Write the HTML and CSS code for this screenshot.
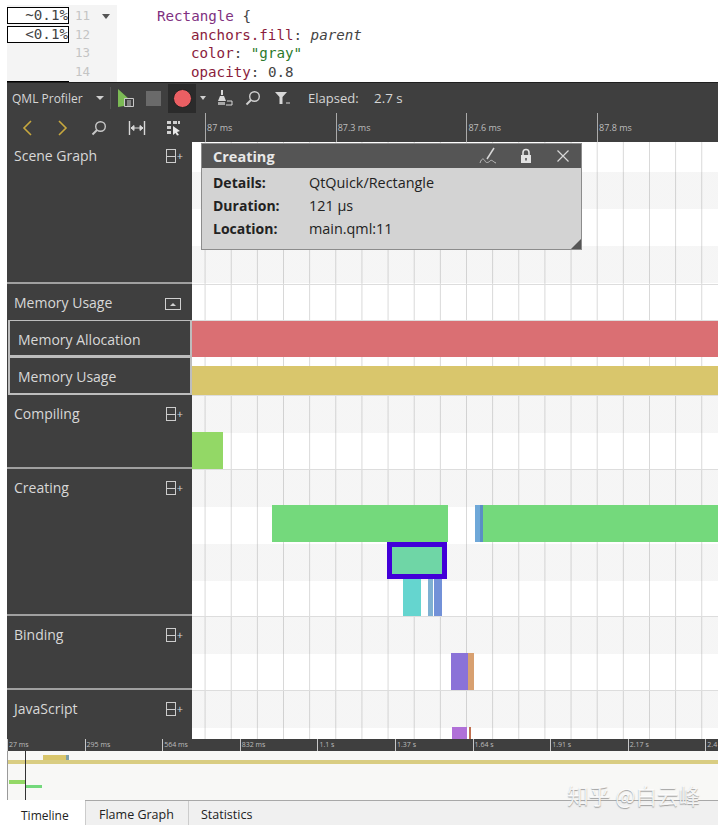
FILE: index.html
```html
<!DOCTYPE html>
<html lang="en">
<head>
    <meta charset="UTF-8">
    <meta name="viewport" content="width=device-width, initial-scale=1.0">
    <title>QML Profiler</title>
    <link rel="stylesheet" href="styles.css">
</head>
<body>
    <div class="editor">
        <div class="gutter">
            <div class="cost-col">
                <div class="cost">~0.1%</div>
                <div class="cost">&lt;0.1%</div>
            </div>
            <div class="line-nums">
                <div>11</div>
                <div>12</div>
                <div>13</div>
                <div>14</div>
            </div>
            <div class="fold"></div>
        </div>
        <div class="code">
            <div class="indent1"><span class="type">Rectangle</span> {</div>
            <div class="indent2"><span class="prop">anchors.fill</span>: <i>parent</i></div>
            <div class="indent2"><span class="prop">color</span>: <span class="str">"gray"</span></div>
            <div class="indent2"><span class="prop">opacity</span>: 0.8</div>
        </div>
    </div>

    <div class="toolbar">
        <span class="tool-title">QML Profiler</span>
        <span class="caret"></span>
        <span class="tool-sep"></span>
        <svg class="ico-start" width="17" height="20" viewBox="0 0 17 20">
            <path d="M0 1 L11 11 L6 11 L6 18 L0 19 Z" fill="#7cbb55"/>
            <path d="M6.5 10.5 h9 v8 h-9 z M9 13 h4 M9 15 h4 M9 17 h4" fill="none" stroke="#c8c8c8"/>
        </svg>
        <span class="stop"></span>
        <span class="rec-box"><span class="rec"></span></span>
        <span class="caret small"></span>
        <svg class="ico-clear" width="18" height="18" viewBox="0 0 18 18">
            <path d="M5 1 h2 v5 h-2 z M2 12 L4 7 h4 l2 5 z" fill="#d8d8d8"/>
            <path d="M11 12 h5 v4 h-6" fill="none" stroke="#d8d8d8"/>
            <path d="M2 13 h7 v3 h-7 z" fill="#a8a8a8"/>
        </svg>
        <svg class="ico-find" width="16" height="16" viewBox="0 0 16 16">
            <circle cx="9.5" cy="6.5" r="4.8" fill="none" stroke="#d0d0d0" stroke-width="1.4"/>
            <path d="M6 10 L1.5 14.5" stroke="#d0d0d0" stroke-width="2"/>
        </svg>
        <svg class="ico-filter" width="17" height="16" viewBox="0 0 17 16">
            <path d="M1 2 h12 l-4.5 5 v7 h-3 v-7 z" fill="#d8d8d8"/>
            <path d="M12 13 h4" stroke="#d8d8d8"/>
        </svg>
        <span class="elapsed">Elapsed:</span>
        <span class="elapsed-val">2.7 s</span>
    </div>

    <div class="ruler-row">
        <div class="nav">
            <svg width="12" height="16" viewBox="0 0 12 16"><path d="M10 1 L3 8 L10 15" fill="none" stroke="#c7a83e" stroke-width="1.6"/></svg>
            <svg class="nav-next" width="12" height="16" viewBox="0 0 12 16"><path d="M2 1 L9 8 L2 15" fill="none" stroke="#c7a83e" stroke-width="1.6"/></svg>
            <svg class="nav-find" width="16" height="16" viewBox="0 0 16 16">
                <circle cx="9.5" cy="6.5" r="4.8" fill="none" stroke="#c8c8c8" stroke-width="1.4"/>
                <path d="M6 10 L1.5 14.5" stroke="#c8c8c8" stroke-width="2"/>
            </svg>
            <svg class="nav-range" width="18" height="16" viewBox="0 0 18 16">
                <path d="M1.5 1 v14 M16.5 1 v14" stroke="#d8d8d8" stroke-width="1.4"/>
                <path d="M3 8 h12 M3 8 l3-2.5 v5 z M15 8 l-3-2.5 v5 z" stroke="#d8d8d8" fill="#d8d8d8"/>
            </svg>
            <svg class="nav-select" width="15" height="16" viewBox="0 0 15 16">
                <path d="M1 1 h4 v3 h-4 z M7 1 h4 v3 h-4 z M12 1 h2 v3 h-2 z M1 6 h4 v3 h-4 z M1 11 h4 v3 h-4 z" fill="#d0d0d0"/>
                <path d="M7 6 L14 11 L11 12 L13 15 L11 15.5 L9.5 13 L7 15 Z" fill="#e8e8e8"/>
            </svg>
        </div>
        <div class="ticks">
            <span class="tick">87 ms</span>
            <span class="tick">87.3 ms</span>
            <span class="tick">87.6 ms</span>
            <span class="tick">87.8 ms</span>
        </div>
    </div>

    <div class="main">
        <div class="side">
            <div class="cat h-scene"><span>Scene Graph</span><span class="expand"><i></i>+</span></div>
            <div class="cat h-mem"><span>Memory Usage</span><span class="collapse"></span></div>
            <div class="cat sub h-alloc"><span>Memory Allocation</span></div>
            <div class="cat sub h-usage"><span>Memory Usage</span></div>
            <div class="cat h-comp"><span>Compiling</span><span class="expand"><i></i>+</span></div>
            <div class="cat h-create"><span>Creating</span><span class="expand"><i></i>+</span></div>
            <div class="cat h-comp"><span>Binding</span><span class="expand"><i></i>+</span></div>
            <div class="cat h-js"><span>JavaScript</span><span class="expand"><i></i>+</span></div>
        </div>
        <div class="canvas">
            <div class="track h-scene stripes"></div>
            <div class="track h-mem line"></div>
            <div class="track h-alloc line"><b class="bar bar-alloc"></b></div>
            <div class="track h-usage"><b class="bar bar-usage"></b></div>
            <div class="track h-comp stripes line"><b class="bar bar-comp"></b></div>
            <div class="track h-create stripes line">
                <b class="bar c1"></b>
                <b class="bar c2"></b>
                <b class="bar c3"></b>
                <b class="bar c4"></b>
                <b class="bar c5"></b>
                <b class="bar c6"></b>
                <b class="bar c7"></b>
                <b class="bar c8"></b>
            </div>
            <div class="track h-comp stripes line">
                <b class="bar b1"></b>
                <b class="bar b2"></b>
            </div>
            <div class="track h-js stripes line">
                <b class="bar j1"></b>
                <b class="bar j2"></b>
            </div>

            <div class="popup">
                <div class="popup-head">
                    <span class="popup-title">Creating</span>
                    <svg class="pop-ico" width="18" height="18" viewBox="0 0 18 18">
                        <path d="M15 1 L8 12" stroke="#d8d8d8" stroke-width="1.5"/>
                        <path d="M1 16 c2 -6 4 -4 5 -2 s3 2 5 0 s3 1 6 2" fill="none" stroke="#bdbdbd"/>
                    </svg>
                    <svg class="pop-ico lock" width="14" height="16" viewBox="0 0 14 16">
                        <path d="M4 7 V4.5 a3 3 0 0 1 6 0 V7" fill="none" stroke="#e2e2e2" stroke-width="1.6"/>
                        <path d="M2 7 h10 v8 h-10 z" fill="#e2e2e2"/>
                        <path d="M6.2 10 h1.6 v2.5 h-1.6 z" fill="#555"/>
                    </svg>
                    <svg class="pop-ico" width="14" height="14" viewBox="0 0 14 14">
                        <path d="M1.5 1.5 L12.5 12.5 M12.5 1.5 L1.5 12.5" stroke="#d8d8d8" stroke-width="1.2"/>
                    </svg>
                </div>
                <div class="popup-body">
                    <div class="label">Details:</div><div>QtQuick/Rectangle</div>
                    <div class="label">Duration:</div><div>121 µs</div>
                    <div class="label">Location:</div><div>main.qml:11</div>
                </div>
                <span class="grip"></span>
            </div>
        </div>
    </div>

    <div class="over-ruler">
        <span>27 ms</span>
        <span>295 ms</span>
        <span>564 ms</span>
        <span>832 ms</span>
        <span>1.1 s</span>
        <span>1.37 s</span>
        <span>1.64 s</span>
        <span>1.91 s</span>
        <span>2.17 s</span>
        <span>2.4</span>
    </div>
    <div class="overview">
        <b class="ov ov1"></b>
        <b class="ov ov2"></b>
        <b class="ov ov3"></b>
        <b class="ov ov4"></b>
        <b class="ov ov5"></b>
        <b class="ov ov6"></b>
    </div>
    <div class="tabs">
        <div class="tab active">Timeline</div>
        <div class="tab flame">Flame Graph</div>
        <div class="tab stats">Statistics</div>
    </div>
    <div class="watermark">知乎 @白云峰</div>
</body>
</html>
```

FILE: styles.css
```css
html, body {
    margin: 0;
    padding: 0;
}
body {
    width: 718px;
    height: 825px;
    overflow: hidden;
    position: relative;
    background-color: #ffffff;
    padding-left: 7px;
    box-sizing: border-box;
    font-family: "Open Sans", "Noto Sans", sans-serif;
}

/* editor */
.editor {
    display: flex;
    height: 82px;
    box-sizing: border-box;
    padding-top: 5px;
    font-family: "DejaVu Sans Mono", monospace;
    font-size: 14.2px;
    line-height: 18.6px;
}
.gutter {
    display: flex;
    flex: none;
    width: 110px;
    background-color: #f4f4f4;
}
.cost-col {
    width: 62px;
    padding-top: 2px;
    box-sizing: border-box;
    border-bottom: 1px solid #000000;
}
.cost {
    height: 17px;
    box-sizing: border-box;
    line-height: 15px;
    border: 1px solid #000000;
    background-color: #ffffff;
    margin-bottom: 2px;
    text-align: right;
    color: #444444;
    overflow: hidden;
}
.line-nums {
    width: 30px;
    padding: 2px 0 0 6px;
    box-sizing: border-box;
    color: #c4c4c4;
    font-size: 12.5px;
}
.fold {
    width: 0;
    height: 0;
    margin: 9px 0 0 3px;
    border-left: 4px solid transparent;
    border-right: 4px solid transparent;
    border-top: 5px solid #555555;
}
.code {
    color: #444444;
    padding-top: 2px;
}
.indent1 {
    padding-left: 40px;
}
.indent2 {
    padding-left: 74px;
}
.type {
    color: #80307f;
}
.prop {
    color: #8a1c3c;
}
.str {
    color: #2c7a2c;
}

/* toolbar */
.toolbar {
    display: flex;
    align-items: center;
    height: 31px;
    background-color: #3f3f3f;
    border-top: 1px solid #1f1f1f;
    box-sizing: border-box;
    color: #d6d6d6;
    font-size: 12px;
    padding-left: 5px;
}
.tool-title {
    width: 84px;
}
.caret {
    width: 0;
    height: 0;
    border-left: 4px solid transparent;
    border-right: 4px solid transparent;
    border-top: 4px solid #d0d0d0;
}
.caret.small {
    border-left-width: 3px;
    border-right-width: 3px;
    margin-left: 4px;
}
.tool-sep {
    width: 1px;
    height: 22px;
    background-color: #555555;
    margin: 0 7px 0 6px;
}
.stop {
    width: 15px;
    height: 15px;
    background-color: #6a6a6a;
    margin: 0 7px 0 11px;
}
.rec-box {
    display: flex;
    align-items: center;
    justify-content: center;
    width: 28px;
    height: 29px;
    background-color: #2b2b2b;
}
.rec {
    width: 17px;
    height: 17px;
    border-radius: 50%;
    background-color: #ea5f63;
    border: 1px solid #222222;
}
.ico-clear {
    margin-left: 10px;
}
.ico-find {
    margin-left: 11px;
}
.ico-filter {
    margin-left: 13px;
}
.elapsed {
    margin-left: 17px;
    width: 66px;
    font-size: 13px;
}
.elapsed-val {
    font-size: 13.4px;
}

/* ruler row */
.ruler-row {
    display: flex;
    height: 29px;
    background-color: #3f3f3f;
}
.nav {
    display: flex;
    align-items: center;
    flex: none;
    width: 198px;
    padding-left: 14px;
    box-sizing: border-box;
}
.nav-next {
    margin-left: 24px;
}
.nav-find {
    margin-left: 22px;
}
.nav-range {
    margin-left: 21px;
}
.nav-select {
    margin-left: 20px;
}
.ticks {
    display: flex;
    flex: 1;
    min-width: 0;
    overflow: hidden;
}
.tick {
    width: 130.7px;
    flex: none;
    box-sizing: border-box;
    border-left: 1px solid #aaaaaa;
    padding: 8px 0 0 1px;
    font-size: 9px;
    color: #bdbdbd;
}

/* category rows */
.main {
    display: flex;
    height: 597px;
}
.side {
    width: 185px;
    background-color: #3f3f3f;
    flex: none;
}
.cat {
    display: flex;
    justify-content: space-between;
    box-sizing: border-box;
    padding: 9px 9px 0 7px;
    color: #d8d8d8;
    font-size: 14px;
    border-bottom: 2px solid #a0a0a0;
}
.cat.h-scene {
    padding-top: 4px;
}
.cat.h-js {
    border-bottom: 0;
}
.cat.sub {
    border: 2px solid #bdbdbd;
    border-top-width: 1px;
    padding: 9px 0 0 8px;
    margin-left: 1px;
}
.cat.h-mem {
    border-bottom: 0;
}
.expand {
    display: flex;
    align-items: center;
    height: 14px;
    margin-top: 3px;
    font-size: 11px;
    line-height: 12px;
}
.expand i {
    width: 10px;
    height: 14px;
    margin-right: 1px;
    box-sizing: border-box;
    border: 1px solid #cccccc;
    background: linear-gradient(#cccccc, #cccccc) center / 100% 1px no-repeat;
}
.collapse {
    display: flex;
    align-items: center;
    justify-content: center;
    width: 14px;
    height: 10px;
    margin: 5px 2px 0 0;
    border: 1px solid #d0d0d0;
}
.collapse::after {
    content: "";
    border-left: 3px solid transparent;
    border-right: 3px solid transparent;
    border-bottom: 3px solid #d0d0d0;
}
.h-scene { height: 142px; }
.h-mem { height: 36px; }
.h-alloc { height: 37px; }
.h-usage { height: 38px; }
.h-comp { height: 74px; }
.h-create { height: 147px; }
.h-js { height: 49px; }

/* timeline canvas */
.canvas {
    flex: 1;
    position: relative;
    overflow: hidden;
    background-color: #ffffff;
    background-image: linear-gradient(90deg, #d8d8d8 1px, transparent 1px);
    background-size: 26.15px 100%;
    background-position: 12.6px 0;
}
.track {
    position: relative;
    box-sizing: border-box;
}
.track.line {
    border-top: 1px solid #dddddd;
}
.stripes {
    background-image: linear-gradient(rgba(120, 120, 120, 0.07) 37px, transparent 37px);
    background-size: 100% 74px;
}
.h-scene.stripes {
    background-position: 0 30px;
}
.bar {
    position: absolute;
    display: block;
}
.bar-alloc { left: 0; right: 0; top: 0; height: 36px; background-color: #da6f73; }
.bar-usage { left: 0; right: 0; top: 9px; height: 29px; background-color: #d9c66c; }
.bar-comp { left: 0; width: 31px; top: 36px; height: 37px; background-color: #93d866; }
.c1 { left: 80px; width: 176px; top: 35px; height: 37px; background-color: #74d97c; }
.c2 { left: 283px; width: 5px; top: 35px; height: 37px; background-color: #6fa8d8; }
.c3 { left: 288px; width: 3px; top: 35px; height: 37px; background-color: #5a8fc4; }
.c4 { left: 291px; right: 0; top: 35px; height: 37px; background-color: #74d97c; }
.c5 { left: 195px; width: 60px; top: 72px; height: 37px; box-sizing: border-box; border: 5px solid #4200d8; background-color: #6fd6a6; }
.c6 { left: 211px; width: 18px; top: 109px; height: 37px; background-color: #65d5cf; }
.c7 { left: 236px; width: 5px; top: 109px; height: 37px; background-color: #7fb0d2; }
.c8 { left: 242px; width: 8px; top: 109px; height: 37px; background-color: #7291d8; }
.b1 { left: 259px; width: 17px; top: 36px; height: 37px; background-color: #8a72d8; }
.b2 { left: 276px; width: 6px; top: 36px; height: 37px; background-color: #d8a070; }
.j1 { left: 260px; width: 15px; top: 36px; height: 13px; background-color: #b070d8; }
.j2 { left: 277px; width: 2px; top: 36px; height: 13px; background-color: #c07050; }

/* details popup */
.popup {
    position: absolute;
    left: 9px;
    top: 1px;
    width: 381px;
    height: 107px;
    box-sizing: border-box;
    border: 1px solid #8c8c8c;
    background-color: #d3d3d3;
}
.popup-head {
    display: flex;
    align-items: center;
    height: 24px;
    padding: 0 11px 0 11px;
    background-color: #555555;
    color: #e8e8e8;
    font-weight: 700;
    font-size: 14.5px;
}
.popup-title {
    flex: 1;
}
.pop-ico {
    margin-left: 20px;
}
.pop-ico.lock {
    margin-right: 3px;
    margin-left: 22px;
}
.popup-body {
    display: grid;
    grid-template-columns: 96px 1fr;
    grid-auto-rows: 23px;
    padding: 5px 0 0 11px;
    font-size: 14.4px;
    color: #222222;
}
.label {
    font-weight: 700;
    font-size: 14px;
}
.grip {
    position: absolute;
    right: 0;
    bottom: 0;
    border-left: 10px solid transparent;
    border-bottom: 10px solid #555555;
}

/* overview */
.over-ruler {
    display: flex;
    height: 12px;
    overflow: hidden;
    background-color: #3f3f3f;
    font-size: 7px;
    line-height: 12px;
    color: #bdbdbd;
}
.over-ruler span {
    width: 77.6px;
    flex: none;
    box-sizing: border-box;
    padding-left: 1px;
    border-left: 1px solid #c8c8c8;
}
.overview {
    position: relative;
    height: 49px;
    background-color: #f8f8f6;
    border-left: 1px solid #9a9a9a;
}
.ov {
    position: absolute;
    display: block;
}
.ov1 { left: 35px; width: 23px; top: 4px; height: 6px; background-color: #d9c66c; }
.ov2 { left: 58px; width: 3px; top: 4px; height: 6px; background-color: #7fa0a8; }
.ov3 { left: 0; right: 0; top: 9px; height: 4px; background-color: #d9cd82; }
.ov4 { left: 1px; width: 16px; top: 29px; height: 4px; background-color: #93d866; }
.ov5 { left: 18px; width: 16px; top: 34px; height: 3px; background-color: #74d97c; }
.ov6 { left: 17px; width: 1px; top: 0; height: 49px; background-color: #333333; }

.tabs {
    display: flex;
    height: 25px;
    background-color: #f0f0f0;
    border-top: 1px solid #a8a8a8;
    box-sizing: border-box;
    font-size: 12.5px;
    color: #222222;
}
.tab {
    padding-top: 5px;
    box-sizing: border-box;
}
.tab.active {
    width: 78px;
    padding: 7px 0 0 14px;
    font-size: 12px;
    background-color: #ffffff;
    margin-top: -1px;
}
.tab.flame {
    width: 104px;
    padding-left: 13px;
    border-left: 1px solid #cccccc;
    border-right: 1px solid #cccccc;
}
.tab.stats {
    width: 78px;
    padding-left: 12px;
}
.watermark {
    position: absolute;
    right: 18px;
    top: 779px;
    font-family: "Noto Sans CJK SC", sans-serif;
    font-size: 21.5px;
    color: rgba(255, 255, 255, 0.85);
    text-shadow: 0 1px 1px rgba(90, 90, 90, 0.55);
}
```
